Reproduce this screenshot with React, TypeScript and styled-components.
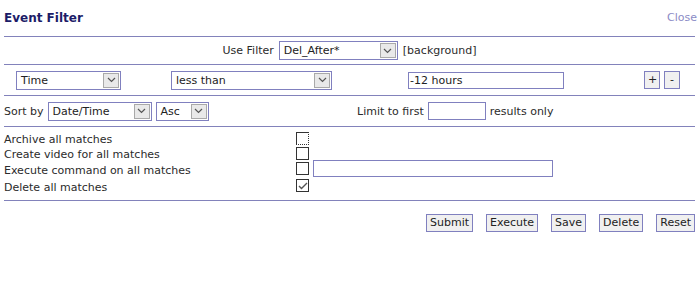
import React from "react";
import styled, { createGlobalStyle } from "styled-components";

const GlobalStyle = createGlobalStyle`
  body {
    margin: 0;
    background: #ffffff;
    font-family: "DejaVu Sans", Verdana, sans-serif;
    font-size: 11px;
    color: #2b2b2b;
  }
`;

const line = "#8282bb";
const fieldBorder = "#8080bf";

const Panel = styled.div`
  margin: 0 4px;
  display: flex;
  flex-direction: column;
`;

const Header = styled.div`
  height: 36px;
  display: flex;
  align-items: center;
  justify-content: space-between;
  border-bottom: 1px solid ${line};
`;

const Title = styled.h2`
  margin: 0 0 1px;
  font-size: 12px;
  font-weight: bold;
  color: #1c1c68;
`;

const CloseLink = styled.a`
  margin: 0 -2px 1px 0;
  color: #8b8bc6;
  font-size: 11px;
  cursor: pointer;
`;

const Section = styled.div<{ $h: number }>`
  height: ${(p) => p.$h}px;
  display: flex;
  align-items: center;
  border-bottom: 1px solid ${line};
`;

const Centered = styled.div`
  flex: 1;
  display: flex;
  align-items: center;
  justify-content: center;
  gap: 5px;
`;

const CriteriaGrid = styled.div`
  flex: 1;
  display: grid;
  grid-template-columns: 155px 237px 236px 1fr;
  align-items: center;
  padding-left: 12px;
`;

const SortGrid = styled.div`
  flex: 1;
  display: grid;
  grid-template-columns: 353px 1fr;
  align-items: center;
`;

const Inline = styled.div`
  display: flex;
  align-items: center;
  gap: 4px;
`;

const SelectWrap = styled.div<{ $w: number }>`
  position: relative;
  width: ${(p) => p.$w}px;
  height: 19px;
  box-sizing: border-box;
  border: 1px solid ${fieldBorder};
  background: #fff;
  display: flex;
  align-items: center;
`;

const SelectText = styled.span`
  padding-left: 4px;
  color: #222;
  white-space: nowrap;
`;

const Arrow = styled.span`
  position: absolute;
  right: 1px;
  top: 1px;
  width: 16px;
  height: 15px;
  box-sizing: border-box;
  border: 1px solid #a9a9a9;
  background: #e9e9e9;
  display: flex;
  align-items: center;
  justify-content: center;
`;

const TextInput = styled.input<{ $w: number; $h: number }>`
  width: ${(p) => p.$w}px;
  height: ${(p) => p.$h}px;
  box-sizing: border-box;
  border: 1px solid ${fieldBorder};
  padding: 0 1px;
  font-family: inherit;
  font-size: 11px;
  color: #222;
  outline: none;
`;

const SmallButtons = styled.div`
  display: flex;
  gap: 4px;
`;

const Button = styled.button<{ $w?: number }>`
  height: 18px;
  ${(p) => (p.$w ? `width: ${p.$w}px;` : "")}
  box-sizing: border-box;
  border: 1px solid ${fieldBorder};
  background: #f0f0f0;
  margin: 0;
  padding: 0 3px;
  font-family: inherit;
  font-size: 11px;
  color: #222;
  line-height: 14px;
  cursor: pointer;
`;

const PlainText = styled.span`
  white-space: nowrap;
`;

const Options = styled.div`
  border-bottom: 1px solid ${line};
  padding: 3px 0 6px;
  display: flex;
  flex-direction: column;
`;

const OptionRow = styled.div<{ $h: number }>`
  display: grid;
  grid-template-columns: 292px 1fr;
  align-items: center;
  height: ${(p) => p.$h}px;
`;

const OptionLabel = styled.span`
  white-space: nowrap;
  padding-top: 3px;
`;

const OptionField = styled.div`
  display: flex;
  align-items: center;
  gap: 4px;
`;

const Box = styled.span<{ $focus?: boolean }>`
  width: 13px;
  height: 13px;
  box-sizing: border-box;
  border: 1px solid #333;
  border-right-style: ${(p) => (p.$focus ? "dotted" : "solid")};
  border-bottom-style: ${(p) => (p.$focus ? "dotted" : "solid")};
  background: #fff;
  display: flex;
  align-items: center;
  justify-content: center;
`;

const Actions = styled.div`
  display: flex;
  justify-content: flex-end;
  gap: 13px;
  margin-top: 13px;
`;

const Chevron = () => (
  <svg width="9" height="6" viewBox="0 0 9 6">
    <path d="M1 1 L4.5 4.5 L8 1" fill="none" stroke="#555" strokeWidth="1.2" />
  </svg>
);

const Select = ({ w, value }: { w: number; value: string }) => (
  <SelectWrap $w={w}>
    <SelectText>{value}</SelectText>
    <Arrow>
      <Chevron />
    </Arrow>
  </SelectWrap>
);

const Check = ({ checked, focus }: { checked?: boolean; focus?: boolean }) => (
  <Box $focus={focus}>
    {checked && (
      <svg width="10" height="8" viewBox="0 0 10 8">
        <path d="M1 4 L3.5 6.5 L9 1" fill="none" stroke="#555" strokeWidth="1.4" />
      </svg>
    )}
  </Box>
);

export default function App() {
  return (
    <>
      <GlobalStyle />
      <Panel>
        <Header>
          <Title>Event Filter</Title>
          <CloseLink>Close</CloseLink>
        </Header>

        <Section $h={27}>
          <Centered>
            <PlainText>Use Filter</PlainText>
            <Select w={119} value="Del_After*" />
            <PlainText>[background]</PlainText>
          </Centered>
        </Section>

        <Section $h={30}>
          <CriteriaGrid>
            <Select w={105} value="Time" />
            <Select w={161} value="less than" />
            <TextInput $w={156} $h={17} defaultValue="-12 hours" />
            <SmallButtons>
              <Button $w={16}>+</Button>
              <Button $w={16}>-</Button>
            </SmallButtons>
          </CriteriaGrid>
        </Section>

        <Section $h={30}>
          <SortGrid>
            <Inline>
              <PlainText>Sort by</PlainText>
              <Select w={104} value="Date/Time" />
              <Select w={53} value="Asc" />
            </Inline>
            <Inline>
              <PlainText>Limit to first</PlainText>
              <TextInput $w={58} $h={18} />
              <PlainText>results only</PlainText>
            </Inline>
          </SortGrid>
        </Section>

        <Options>
          <OptionRow $h={15}>
            <OptionLabel>Archive all matches</OptionLabel>
            <OptionField>
              <Check focus />
            </OptionField>
          </OptionRow>
          <OptionRow $h={15}>
            <OptionLabel>Create video for all matches</OptionLabel>
            <OptionField>
              <Check />
            </OptionField>
          </OptionRow>
          <OptionRow $h={17}>
            <OptionLabel>Execute command on all matches</OptionLabel>
            <OptionField>
              <Check />
              <TextInput $w={240} $h={17} />
            </OptionField>
          </OptionRow>
          <OptionRow $h={17}>
            <OptionLabel>Delete all matches</OptionLabel>
            <OptionField>
              <Check checked />
            </OptionField>
          </OptionRow>
        </Options>

        <Actions>
          <Button>Submit</Button>
          <Button>Execute</Button>
          <Button>Save</Button>
          <Button>Delete</Button>
          <Button>Reset</Button>
        </Actions>
      </Panel>
    </>
  );
}
